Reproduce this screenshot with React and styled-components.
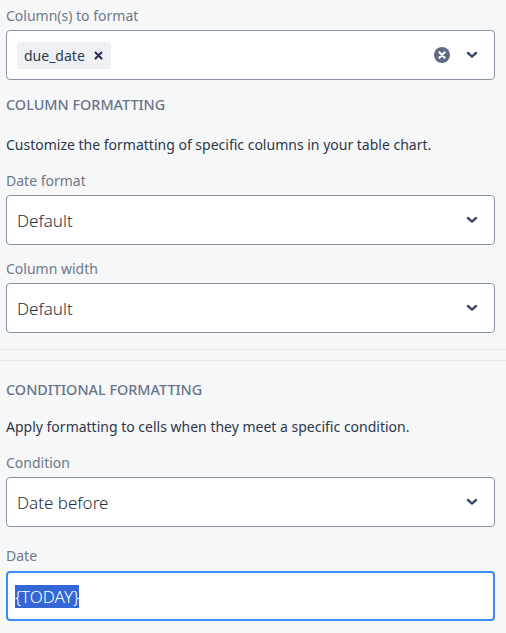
import React from 'react';
import styled, { createGlobalStyle } from 'styled-components';

const Global = createGlobalStyle`
  html, body { margin: 0; padding: 0; background: #f6f7f9; }
  body { font-family: "Noto Sans", "Open Sans", sans-serif; color: #2b3547; }
  #root { width: 506px; }
  ::selection { background: #3367d6; color: #fff; }
`;

const Page = styled.div`
  width: 506px;
  height: 633px;
  overflow: hidden;
  background: #f6f7f9;
`;

const Section = styled.div`
  padding: ${p => p.$top}px 11px ${p => p.$bottom}px 6px;
  border-top: ${p => (p.$divided ? '1px solid #e6e8ec' : 'none')};
  border-bottom: ${p => (p.$closed ? '1px solid #e6e8ec' : 'none')};
  margin-bottom: ${p => p.$gap || 0}px;
`;

const Field = styled.div`
  display: flex;
  flex-direction: column;
  gap: ${p => p.$gap || 4}px;
  margin-bottom: ${p => p.$mb || 0}px;
`;

const Label = styled.label`
  font-size: 14px;
  line-height: 20px;
  color: #6f7889;
`;

const Heading = styled.div`
  font-size: 14.4px;
  line-height: 20px;
  font-weight: 500;
  color: #69748a;
  text-transform: uppercase;
  margin-bottom: ${p => p.$mb || 20}px;
`;

const Desc = styled.p`
  margin: 0 0 16px;
  font-size: 14px;
  line-height: 20px;
  color: #2d3748;
`;

const Box = styled.div`
  box-sizing: border-box;
  height: 50px;
  display: flex;
  align-items: center;
  background: #fff;
  border: ${p => (p.$focus ? '2px solid #3b8cf8' : '1px solid #8a93a6')};
  border-radius: 4px;
  padding: 0 ${p => (p.$focus ? 9 : 16)}px 0 ${p => (p.$focus ? 7 : 10)}px;
`;

const Value = styled.div`
  flex: 1;
  font-size: 17px;
  font-weight: 300;
  color: #27303f;
`;

const Tag = styled.div`
  display: flex;
  align-items: center;
  gap: 9px;
  height: 27px;
  padding: 0 8px 0 7px;
  background: #eef0f3;
  border-radius: 3px;
  font-size: 14px;
  color: #2d3a50;
`;

const Tags = styled.div`
  flex: 1;
  display: flex;
`;

const Icons = styled.div`
  display: flex;
  align-items: center;
  gap: 16px;
`;

const TextInput = styled.input`
  flex: 1;
  border: none;
  outline: none;
  padding: 0;
  font-family: inherit;
  font-size: 17px;
  font-weight: 300;
  color: #27303f;
  background: transparent;
`;

const Chevron = () => (
  <svg width="12" height="8" viewBox="0 0 12 8">
    <path d="M2 2l4 3.6L10 2" fill="none" stroke="#3d4a63" strokeWidth="2.4" strokeLinecap="round" strokeLinejoin="round" />
  </svg>
);

const ClearIcon = () => (
  <svg width="16" height="16" viewBox="0 0 16 16">
    <circle cx="8" cy="8" r="8" fill="#5f6b82" />
    <path d="M5.3 5.3l5.4 5.4M10.7 5.3l-5.4 5.4" stroke="#fff" strokeWidth="2" strokeLinecap="round" />
  </svg>
);

const SmallX = () => (
  <svg width="9" height="9" viewBox="0 0 9 9">
    <path d="M1.5 1.5l6 6M7.5 1.5l-6 6" stroke="#243048" strokeWidth="2.1" strokeLinecap="round" />
  </svg>
);

function Select({ value }) {
  return (
    <Box>
      <Value>{value}</Value>
      <Icons>
        <Chevron />
      </Icons>
    </Box>
  );
}

export default function App() {
  const inputRef = React.useRef(null);
  React.useEffect(() => {
    if (inputRef.current) {
      inputRef.current.focus();
      inputRef.current.select();
    }
  }, []);

  return (
    <Page>
      <Global />
      <Section $top={6} $bottom={16} $closed $gap={10}>
        <Field $mb={15}>
          <Label>Column(s) to format</Label>
          <Box>
            <Tags>
              <Tag>
                due_date
                <SmallX />
              </Tag>
            </Tags>
            <Icons>
              <ClearIcon />
              <Chevron />
            </Icons>
          </Box>
        </Field>
        <Heading>Column formatting</Heading>
        <Desc>Customize the formatting of specific columns in your table chart.</Desc>
        <Field $mb={14}>
          <Label>Date format</Label>
          <Select value="Default" />
        </Field>
        <Field>
          <Label>Column width</Label>
          <Select value="Default" />
        </Field>
      </Section>
      <Section $top={19} $bottom={0} $divided>
        <Heading $mb={17}>Conditional formatting</Heading>
        <Desc>Apply formatting to cells when they meet a specific condition.</Desc>
        <Field $mb={19}>
          <Label>Condition</Label>
          <Select value="Date before" />
        </Field>
        <Field $gap={5}>
          <Label>Date</Label>
          <Box $focus>
            <TextInput ref={inputRef} defaultValue="{TODAY}" />
          </Box>
        </Field>
      </Section>
    </Page>
  );
}
